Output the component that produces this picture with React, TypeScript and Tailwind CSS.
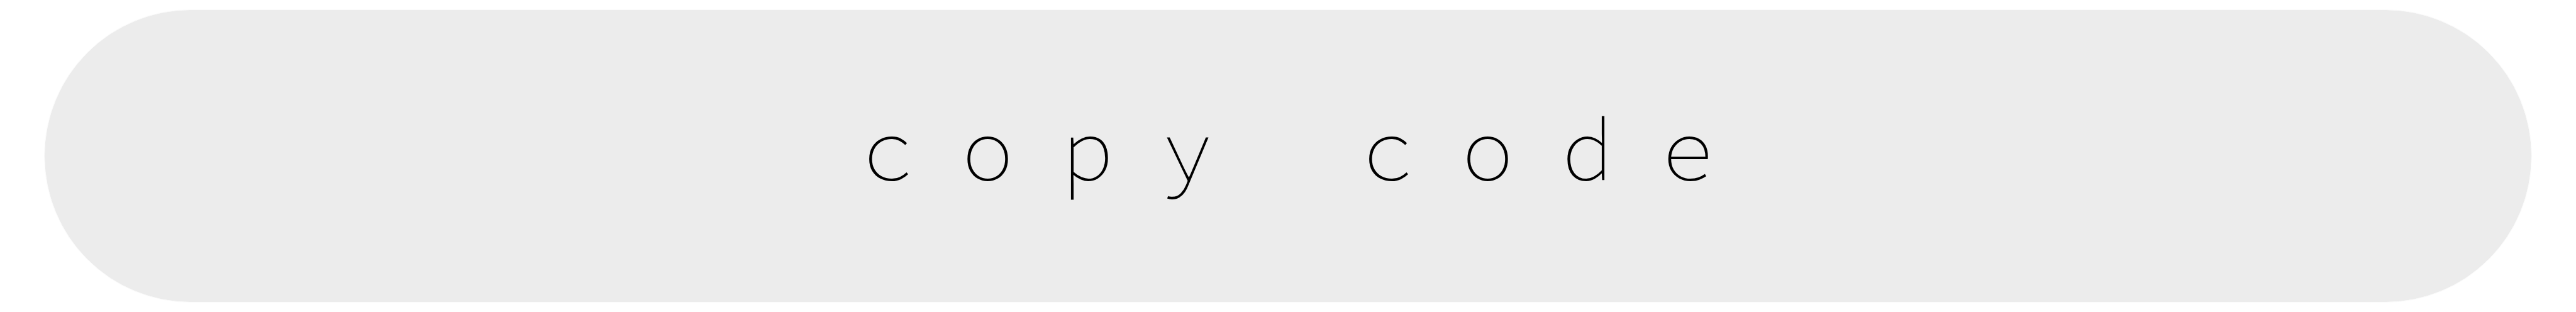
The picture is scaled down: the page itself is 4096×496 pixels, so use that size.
export default function App() {
  return (
    <main className="flex min-h-screen bg-white px-[70px] py-[15px]">
      <button
        type="button"
        className="flex flex-1 cursor-pointer items-center justify-center rounded-full border border-[#fafafa] bg-[#ececec] bg-clip-padding pb-6 pl-[74px] font-['Source_Code_Pro','Noto_Sans_CJK_SC',monospace] text-[140px] leading-[176px] font-extralight tracking-[75px] text-black"
      >
        copy code
      </button>
    </main>
  );
}
